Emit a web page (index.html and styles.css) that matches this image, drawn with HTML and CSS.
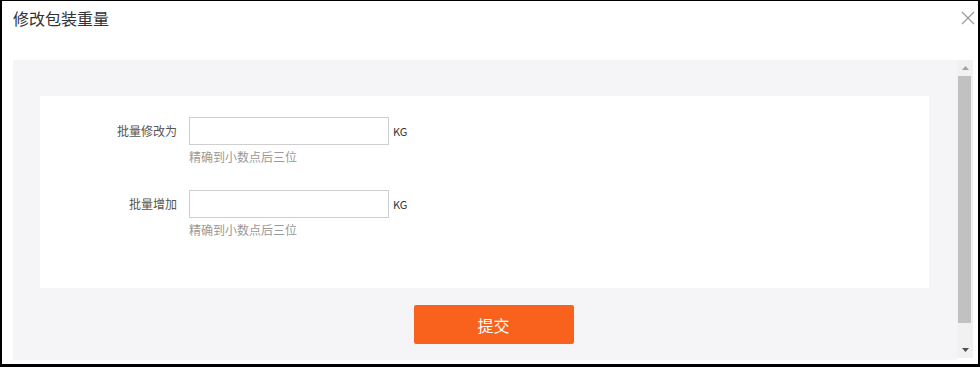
FILE: index.html
```html
<!DOCTYPE html>
<html lang="zh-CN">
<head>
<meta charset="utf-8">
<title>修改包装重量</title>
<link rel="stylesheet" href="styles.css">
</head>
<body>
<div class="dialog">
  <div class="header">
    <div class="title">修改包装重量</div>
    <div class="close" aria-label="关闭">
      <svg width="14" height="14" viewBox="0 0 14 14"><path d="M1 1L13 13M13 1L1 13" stroke="#9a9a9a" stroke-width="1.2" fill="none"/></svg>
    </div>
  </div>
  <div class="body">
    <div class="scroll">
      <div class="card">
        <div class="row">
          <label class="label">批量修改为</label>
          <div class="field">
            <div class="line"><input class="input" type="text"><span class="unit">KG</span></div>
            <div class="hint">精确到小数点后三位</div>
          </div>
        </div>
        <div class="row">
          <label class="label">批量增加</label>
          <div class="field">
            <div class="line"><input class="input" type="text"><span class="unit">KG</span></div>
            <div class="hint">精确到小数点后三位</div>
          </div>
        </div>
      </div>
      <div class="actions"><button class="submit" type="button">提交</button></div>
    </div>
    <div class="scrollbar">
      <div class="sb-btn"><svg width="7" height="4" viewBox="0 0 7 4"><path d="M0 4L3.5 0L7 4Z" fill="#a3a3a3"/></svg></div>
      <div class="sb-track"><div class="sb-thumb"></div></div>
      <div class="sb-btn"><svg width="7" height="4" viewBox="0 0 7 4"><path d="M0 0L7 0L3.5 4Z" fill="#505050"/></svg></div>
    </div>
  </div>
</div>
</body>
</html>
```
FILE: styles.css
```css
* { box-sizing: border-box; }
html, body { margin: 0; padding: 0; }
body {
  background: #000;
  width: 980px;
  height: 367px;
  overflow: hidden;
  font-family: "Noto Sans CJK SC", "Liberation Sans", sans-serif;
}
.dialog {
  margin: 1px 2px 0 2px;
  width: 976px;
  height: 363px;
  background: #fff;
  display: flex;
  flex-direction: column;
}
.header {
  height: 59px;
  display: flex;
  justify-content: space-between;
  align-items: flex-start;
  padding: 8px 3px 0 11px;
}
.title {
  font-size: 16px;
  line-height: 18px;
  color: #333;
}
.close {
  width: 14px;
  height: 14px;
  margin-top: 2px;
  display: flex;
}
.body {
  display: flex;
  margin-left: 11px;
  width: 960px;
  height: 300px;
}
.scroll {
  flex: 1;
  background: #f5f5f7;
  padding: 36px 28px 0 27px;
}
.card {
  background: #fff;
  height: 192px;
  padding-top: 21px;
  display: flex;
  flex-direction: column;
  gap: 23px;
}
.row {
  display: flex;
  align-items: flex-start;
}
.label {
  width: 137px;
  margin-right: 12px;
  text-align: right;
  font-size: 12px;
  line-height: 28px;
  color: #555;
}
.line {
  display: flex;
  align-items: center;
}
.input {
  width: 200px;
  height: 28px;
  border: 1px solid #cfcfcf;
  margin: 0;
  padding: 0 6px;
  background: #fff;
  outline: none;
}
.unit {
  margin-left: 4px;
  font-size: 11px;
  color: #333;
  line-height: 28px;
}
.hint {
  margin-top: 2px;
  font-size: 12px;
  line-height: 20px;
  color: #999;
}
.actions {
  display: flex;
  justify-content: center;
  padding-top: 17px;
}
.submit {
  width: 160px;
  height: 39px;
  border: none;
  border-radius: 2px;
  background: #f8621c;
  color: #fff;
  font-family: "Noto Sans CJK SC", sans-serif;
  font-size: 16px;
  padding: 0;
  margin-left: 18px;
}
.scrollbar {
  width: 16px;
  height: 298px;
  background: #f1f1f1;
  display: flex;
  flex-direction: column;
}
.sb-btn {
  height: 16px;
  display: flex;
  align-items: center;
  justify-content: center;
}
.sb-track {
  flex: 1;
  padding: 0 2px 20px 1px;
}
.sb-thumb {
  height: 247px;
  background: #c1c1c1;
}
```
